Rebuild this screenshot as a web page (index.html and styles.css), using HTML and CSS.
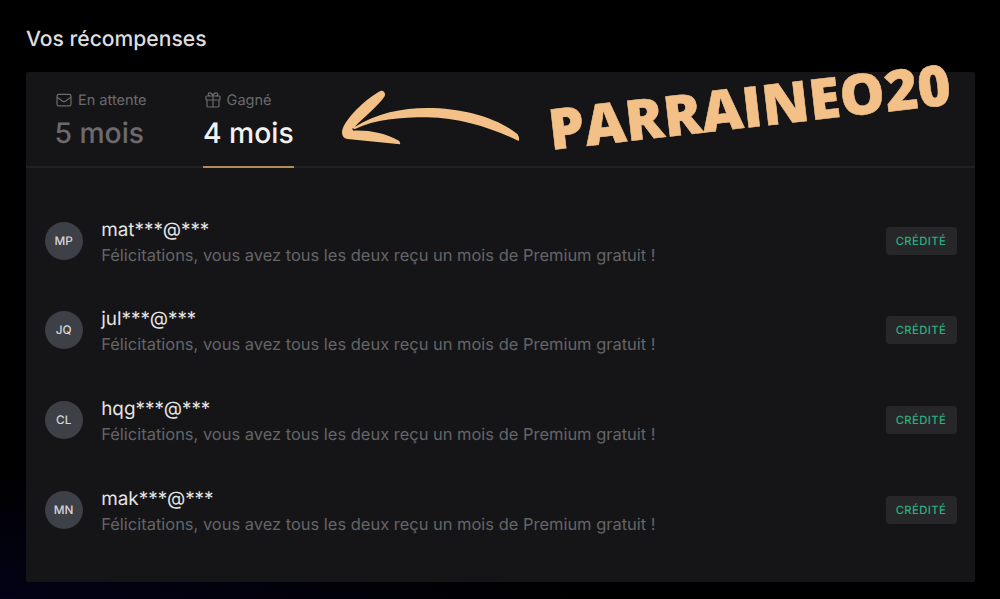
FILE: index.html
```
<!DOCTYPE html>
<html lang="fr">
<head>
    <meta charset="UTF-8">
    <meta name="viewport" content="width=device-width, initial-scale=1.0">
    <title>Vos récompenses</title>
    <link rel="stylesheet" href="styles.css">
</head>
<body>
    <h1 class="title">Vos récompenses</h1>

    <div class="card">
        <div class="tabs">
            <div class="tab">
                <div class="tab-label">
                    <svg class="icon" viewBox="0 0 16 16">
                        <rect x="1" y="2.4" width="14" height="11.4" rx="1.6"/>
                        <path d="M1.2 5.2 L6.6 9.2 Q8 10.2 9.4 9.2 L14.8 5.2"/>
                    </svg>
                    <span>En attente</span>
                </div>
                <div class="tab-value">5 mois</div>
            </div>
            <div class="tab active">
                <div class="tab-label">
                    <svg class="icon" viewBox="0 0 16 16">
                        <rect x="1" y="4" width="14" height="4" rx="0.8"/>
                        <path d="M2 8 V14 Q2 15 3 15 H13 Q14 15 14 14 V8"/>
                        <path d="M8 4 V15"/>
                        <path d="M8 4 C7.4 1.8 6.2 0.8 4.9 0.8 C2.6 0.8 2.6 4 4.9 4"/>
                        <path d="M8 4 C8.6 1.8 9.8 0.8 11.1 0.8 C13.4 0.8 13.4 4 11.1 4"/>
                    </svg>
                    <span>Gagné</span>
                </div>
                <div class="tab-value">4 mois</div>
            </div>
        </div>

        <div class="list">
            <div class="row">
                <div class="avatar">MP</div>
                <div class="info">
                    <p class="email">mat***@***</p>
                    <p class="message">Félicitations, vous avez tous les deux reçu un mois de Premium gratuit !</p>
                </div>
                <span class="badge">CRÉDITÉ</span>
            </div>
            <div class="row">
                <div class="avatar">JQ</div>
                <div class="info">
                    <p class="email">jul***@***</p>
                    <p class="message">Félicitations, vous avez tous les deux reçu un mois de Premium gratuit !</p>
                </div>
                <span class="badge">CRÉDITÉ</span>
            </div>
            <div class="row">
                <div class="avatar">CL</div>
                <div class="info">
                    <p class="email">hqg***@***</p>
                    <p class="message">Félicitations, vous avez tous les deux reçu un mois de Premium gratuit !</p>
                </div>
                <span class="badge">CRÉDITÉ</span>
            </div>
            <div class="row">
                <div class="avatar">MN</div>
                <div class="info">
                    <p class="email">mak***@***</p>
                    <p class="message">Félicitations, vous avez tous les deux reçu un mois de Premium gratuit !</p>
                </div>
                <span class="badge">CRÉDITÉ</span>
            </div>
        </div>
    </div>

    <!-- promo code and arrow over the card -->
    <svg class="arrow" viewBox="0 0 660 390">
        <path d="M181 123 C190 120 198 129 194 139 C175 168 130 203 104 231 C170 190 245 174 322 174 C430 174 535 205 592 252 Q600 264 596 273 C520 236 420 203 322 202 C240 202 165 208 105 237 L96 235 L100 242 C150 240 195 250 234 271 Q242 275 240 283 L82 267 C65 264 62 247 71 229 C90 193 140 145 181 123 Z"/>
    </svg>
    <div class="code">PARRAINEO20</div>
</body>
</html>
```
FILE: styles.css
```
* {
    box-sizing: border-box;
}

body {
    margin: 0;
    height: 599px;
    padding: 26px 25px 0 26px;
    overflow: hidden;
    position: relative;
    background: linear-gradient(90deg, rgba(0, 0, 0, 0) 0%, #000 60%), linear-gradient(180deg, #000 78%, #030216 100%);
    font-family: Inter, "Liberation Sans", sans-serif;
    text-rendering: geometricPrecision;
    color: #e6e6e6;
}

.title {
    margin: 0 0 19px;
    font-size: 21.1px;
    line-height: 27px;
    font-weight: 500;
    color: #dedede;
}

.card {
    height: 510px;
    background-color: #151517;
    border-radius: 2px;
}

.tabs {
    display: flex;
    gap: 56px;
    height: 96px;
    padding: 18px 28px 0;
    border-bottom: 2px solid #212123;
}

.tab {
    height: 78px;
    color: #6b6b6e;
}

.tab-label {
    display: flex;
    align-items: center;
    gap: 6px;
    height: 20px;
    padding-left: 2px;
    font-size: 14.5px;
}

.icon {
    width: 16px;
    height: 16px;
    fill: none;
    stroke: #6b6b6e;
    stroke-width: 1.2;
}

.tab-value {
    margin-top: 6px;
    padding-left: 0.4px;
    font-size: 28.3px;
    line-height: 34px;
    font-weight: 500;
}

.active {
    border-bottom: 2px solid #b08d5c;
}

.active .tab-value {
    color: #f2f2f2;
}

.list {
    padding: 28px 18.5px 0 18.7px;
}

.row {
    display: flex;
    align-items: center;
    height: 89.6px;
}

.avatar {
    display: flex;
    align-items: center;
    justify-content: center;
    width: 38px;
    height: 38px;
    border-radius: 50%;
    background-color: #3e4047;
    color: #d6d6da;
    font-size: 11.8px;
    font-weight: 500;
}

.info {
    flex: 1;
    padding: 3px 0 0 18.5px;
}

.info p {
    margin: 0;
}

.email {
    font-size: 18.9px;
    line-height: 26px;
    color: #e4e4e4;
}

.message {
    font-size: 16.47px;
    line-height: 25px;
    color: #646467;
}

.badge {
    width: 71px;
    height: 28px;
    border-radius: 4px;
    background-color: #272729;
    color: #2aae7f;
    font-size: 11.3px;
    line-height: 29px;
    font-weight: 500;
    letter-spacing: 0.4px;
    text-align: center;
}

.arrow {
    position: absolute;
    left: 320px;
    top: 50px;
    width: 220px;
    height: 130px;
    fill: #f3c088;
}

.code {
    position: absolute;
    left: 551px;
    top: 92.5px;
    font-family: "Open Sans", sans-serif;
    font-size: 56.5px;
    line-height: 72px;
    font-weight: 800;
    letter-spacing: 0.1px;
    color: #f3c088;
    -webkit-text-stroke: 0.6px #f3c088;
    transform: rotate(-6.5deg);
    transform-origin: 0 56px;
}
```
